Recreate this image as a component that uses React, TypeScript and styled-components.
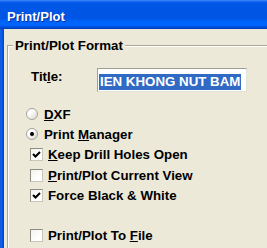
import React from "react";
import styled, { createGlobalStyle } from "styled-components";

// THEMING
const dialogBg = "#ece9d8";
const etchDark = "#aca899";
const textFont = `"Liberation Sans", Arial, sans-serif`;
const textSize = "13.3px";

const GlobalStyle = createGlobalStyle`
  html, body {
    margin: 0;
    padding: 0;
    background: ${dialogBg};
  }
  body {
    font-family: ${textFont};
    color: #000;
  }
`;

const Window = styled.div`
  width: 267px;
  height: 248px;
  overflow: hidden;
  display: flex;
  flex-direction: column;
  background: ${dialogBg};
`;

const TitleBar = styled.div`
  flex: none;
  height: 29px;
  box-sizing: border-box;
  padding: 4px 0 0 7px;
  line-height: 25px;
  font-size: 13px;
  font-weight: bold;
  color: #fff;
  text-shadow: 1px 1px 0 #0a2d9e;
  background: linear-gradient(
    to bottom,
    #4b94ff 0px,
    #1c6cf5 1px,
    #0057e6 3px,
    #0055e4 18px,
    #0062f8 21px,
    #0066ff 25px,
    #0050dc 27px,
    #003bb0 29px
  );
`;

const Frame = styled.div`
  flex: 1;
  display: flex;
  min-height: 0;
`;

const LeftEdge = styled.div`
  flex: none;
  width: 4px;
  background: linear-gradient(to right, #0a4fd8 0, #1b68f0 1px, #0058e8 2px, #0046cc 4px);
`;

const Client = styled.div`
  flex: 1;
  min-width: 0;
  padding: 8px 0 0 3px;
  margin-right: -30px;
`;

const Group = styled.fieldset`
  margin: 0;
  padding: 0 0 40px;
  min-width: 0;
  border: 1px solid ${etchDark};
  box-shadow: inset 1px 1px 0 #fff;
`;

const GroupLabel = styled.legend`
  margin-left: 5px;
  padding: 0 2px;
  height: 17px;
  line-height: 17px;
  background: ${dialogBg};
  font-size: ${textSize};
  font-weight: bold;
`;

const GroupBody = styled.div`
  display: flex;
  flex-direction: column;
  padding-top: 14px;
`;

const FieldRow = styled.div`
  display: flex;
  align-items: flex-start;
  height: 24px;
  padding-left: 23px;
  margin-bottom: 12px;
`;

const FieldLabel = styled.label`
  flex: none;
  width: 66px;
  margin-top: 1px;
  line-height: 16px;
  font-size: ${textSize};
  font-weight: bold;
`;

const TextBox = styled.div`
  flex: none;
  width: 150px;
  height: 24px;
  box-sizing: border-box;
  padding: 3px 1px;
  border: 1px solid;
  border-color: #a09f96 #e4e2d6 #e4e2d6 #a09f96;
  background: #fff;
  white-space: nowrap;
  overflow: hidden;
`;

const Selected = styled.span`
  display: inline-block;
  height: 16px;
  line-height: 16px;
  padding: 0 1px;
  background: #316ac5;
  color: #fff;
  font-size: ${textSize};
  font-weight: bold;
`;

const Option = styled.div<{ $indent: number; $height: number; $gap: number; $top?: number }>`
  display: flex;
  align-items: center;
  gap: ${({ $gap }) => $gap}px;
  height: ${({ $height }) => $height}px;
  margin-top: ${({ $top }) => $top || 0}px;
  padding-left: ${({ $indent }) => $indent}px;
  font-size: ${textSize};
  font-weight: bold;
  white-space: nowrap;
`;

const RadioCircle = styled.span`
  flex: none;
  width: 12px;
  height: 12px;
  box-sizing: border-box;
  border-radius: 50%;
  border: 1px solid #a4a39a;
  background: linear-gradient(135deg, #ffffff 35%, #d8d5c8 100%);
  display: flex;
  align-items: center;
  justify-content: center;
`;

const RadioDot = styled.span`
  width: 4px;
  height: 4px;
  border-radius: 50%;
  background: #000;
`;

const CheckSquare = styled.span`
  flex: none;
  width: 13px;
  height: 13px;
  box-sizing: border-box;
  border: 1px solid;
  border-color: #8d8c84 #c9c7ba #c9c7ba #8d8c84;
  background: linear-gradient(135deg, #f3f2ec 0%, #ffffff 70%);
  display: flex;
  align-items: center;
  justify-content: center;
`;

const Radio = ({ checked, children }: { checked?: boolean; children: React.ReactNode }) => (
  <Option $indent={18} $height={20} $gap={6}>
    <RadioCircle>{checked && <RadioDot />}</RadioCircle>
    <span>{children}</span>
  </Option>
);

const Check = ({
  checked,
  height,
  top,
  children,
}: {
  checked?: boolean;
  height: number;
  top?: number;
  children: React.ReactNode;
}) => (
  <Option $indent={22} $height={height} $gap={5} $top={top}>
    <CheckSquare>
      {checked && (
        <svg width="9" height="9" viewBox="0 0 9 9">
          <path d="M1 4 L3.5 6.5 L8 2" fill="none" stroke="#000" strokeWidth="2" />
        </svg>
      )}
    </CheckSquare>
    <span>{children}</span>
  </Option>
);

const App = () => {
  return (
    <>
      <GlobalStyle />
      <Window>
        <TitleBar>Print/Plot</TitleBar>
        <Frame>
          <LeftEdge />
          <Client>
            <Group>
              <GroupLabel>Print/Plot Format</GroupLabel>
              <GroupBody>
                <FieldRow>
                  <FieldLabel>
                    Tit<u>l</u>e:
                  </FieldLabel>
                  <TextBox>
                    <Selected>IEN KHONG NUT BAM</Selected>
                  </TextBox>
                </FieldRow>
                <Radio>
                  <u>D</u>XF
                </Radio>
                <Radio checked>
                  Print <u>M</u>anager
                </Radio>
                <Check checked height={21}>
                  <u>K</u>eep Drill Holes Open
                </Check>
                <Check height={20}>
                  <u>P</u>rint/Plot Current View
                </Check>
                <Check checked height={21}>
                  Force Black &amp; White
                </Check>
                <Check height={21} top={19}>
                  Print/Plot To <u>F</u>ile
                </Check>
              </GroupBody>
            </Group>
          </Client>
        </Frame>
      </Window>
    </>
  );
};

export default App;
